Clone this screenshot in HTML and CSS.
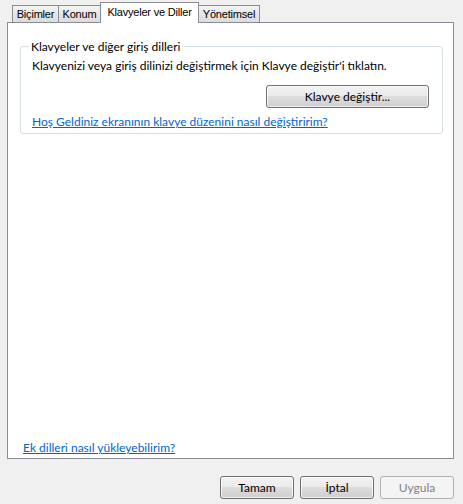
FILE: index.html
```html
<!DOCTYPE html>
<html lang="tr">
<head>
<meta charset="utf-8">
<title>Bölge ve Dil</title>
<link rel="stylesheet" href="styles.css">
</head>
<body>
<div class="dialog">
  <div class="tabs">
    <div class="tab t1">Biçimler</div>
    <div class="tab t2">Konum</div>
    <div class="tab t3 active">Klavyeler ve Diller</div>
    <div class="tab t4">Yönetimsel</div>
  </div>
  <div class="panel">
    <fieldset class="group">
      <legend class="group-title">Klavyeler ve diğer giriş dilleri</legend>
      <p class="desc">Klavyenizi veya giriş dilinizi değiştirmek için Klavye değiştir'i tıklatın.</p>
      <div class="btn-row"><button class="btn wide">Klavye değiştir...</button></div>
      <a class="link" href="#">Hoş Geldiniz ekranının klavye düzenini nasıl değiştiririm?</a>
    </fieldset>
    <a class="link bottom-link" href="#">Ek dilleri nasıl yükleyebilirim?</a>
  </div>
  <div class="footer">
    <button class="btn">Tamam</button>
    <button class="btn">İptal</button>
    <button class="btn" disabled>Uygula</button>
  </div>
</div>
</body>
</html>
```

FILE: styles.css
```css
* { box-sizing: border-box; }
html, body {
  margin: 0;
  padding: 0;
  background: #f0f0f0;
  width: 463px;
  height: 504px;
  overflow: hidden;
  font-family: Lato, "Open Sans", sans-serif;
  font-size: 12px;
  font-weight: 400;
  color: #000;
}
.dialog {
  height: 504px;
  padding: 1px 9px 0 7px;
  background: #f0f0f0;
}
.tabs {
  display: flex;
  align-items: flex-end;
  height: 21px;
  padding-left: 5px;
  position: relative;
  z-index: 1;
}
.tab {
  height: 17px;
  border: 1px solid #898c95;
  border-bottom: none;
  border-right: none;
  background: linear-gradient(#f4f4f4, #e6e6e6 50%, #dcdcdc);
  font-family: "Liberation Sans", Arial, sans-serif;
  font-size: 11px;
  letter-spacing: -0.2px;
  line-height: 16px;
  text-align: center;
  color: #000;
}
.t1 { width: 46px; }
.t2 { width: 42px; }
.t3 { width: 99px; }
.t4 { width: 61px; border-right: 1px solid #898c95; }
.tab.active {
  background: #fff;
  border-right: 1px solid #898c95;
  margin-bottom: -1px;
  height: 21px;
  line-height: 18px;
}
.tab.active + .tab { border-left: none; }
.panel {
  display: flex;
  flex-direction: column;
  height: 437px;
  background: #fff;
  border: 1px solid #898c95;
  padding: 0 10px 2px 12px;
}
.group {
  margin: 16px 0 0 0;
  padding: 0 13px 4px 11px;
  border: 1px solid #d5dfe5;
  border-radius: 3px;
}
.group-title {
  padding: 0 2px;
  margin-left: -3px;
  line-height: 15px;
}
.desc {
  margin: 4px 0 0 0;
  line-height: 15px;
}
.btn-row {
  display: flex;
  justify-content: flex-end;
  margin-top: 12px;
}
.btn {
  height: 23px;
  width: 74px;
  border: 1px solid #707070;
  border-radius: 3px;
  background: linear-gradient(#f2f2f2 0%, #ebebeb 45%, #dddddd 50%, #cfcfcf 100%);
  box-shadow: inset 0 0 0 1px rgba(255,255,255,0.7);
  font-family: Lato, "Open Sans", sans-serif;
  font-size: 12px;
  font-weight: 400;
  color: #000;
  padding: 0;
  line-height: 20px;
}
.btn.wide { width: 163px; }
.btn:disabled {
  border-color: #adb2b5;
  background: #f4f4f4;
  color: #838383;
  box-shadow: none;
}
.link {
  color: #0066cc;
  text-decoration: underline;
  line-height: 15px;
  display: block;
  margin-top: 6px;
}
.bottom-link {
  margin-top: auto;
  margin-left: 3px;
  margin-bottom: 1px;
  align-self: flex-start;
}
.footer {
  display: flex;
  justify-content: flex-end;
  gap: 6px;
  margin-top: 17px;
}
```
